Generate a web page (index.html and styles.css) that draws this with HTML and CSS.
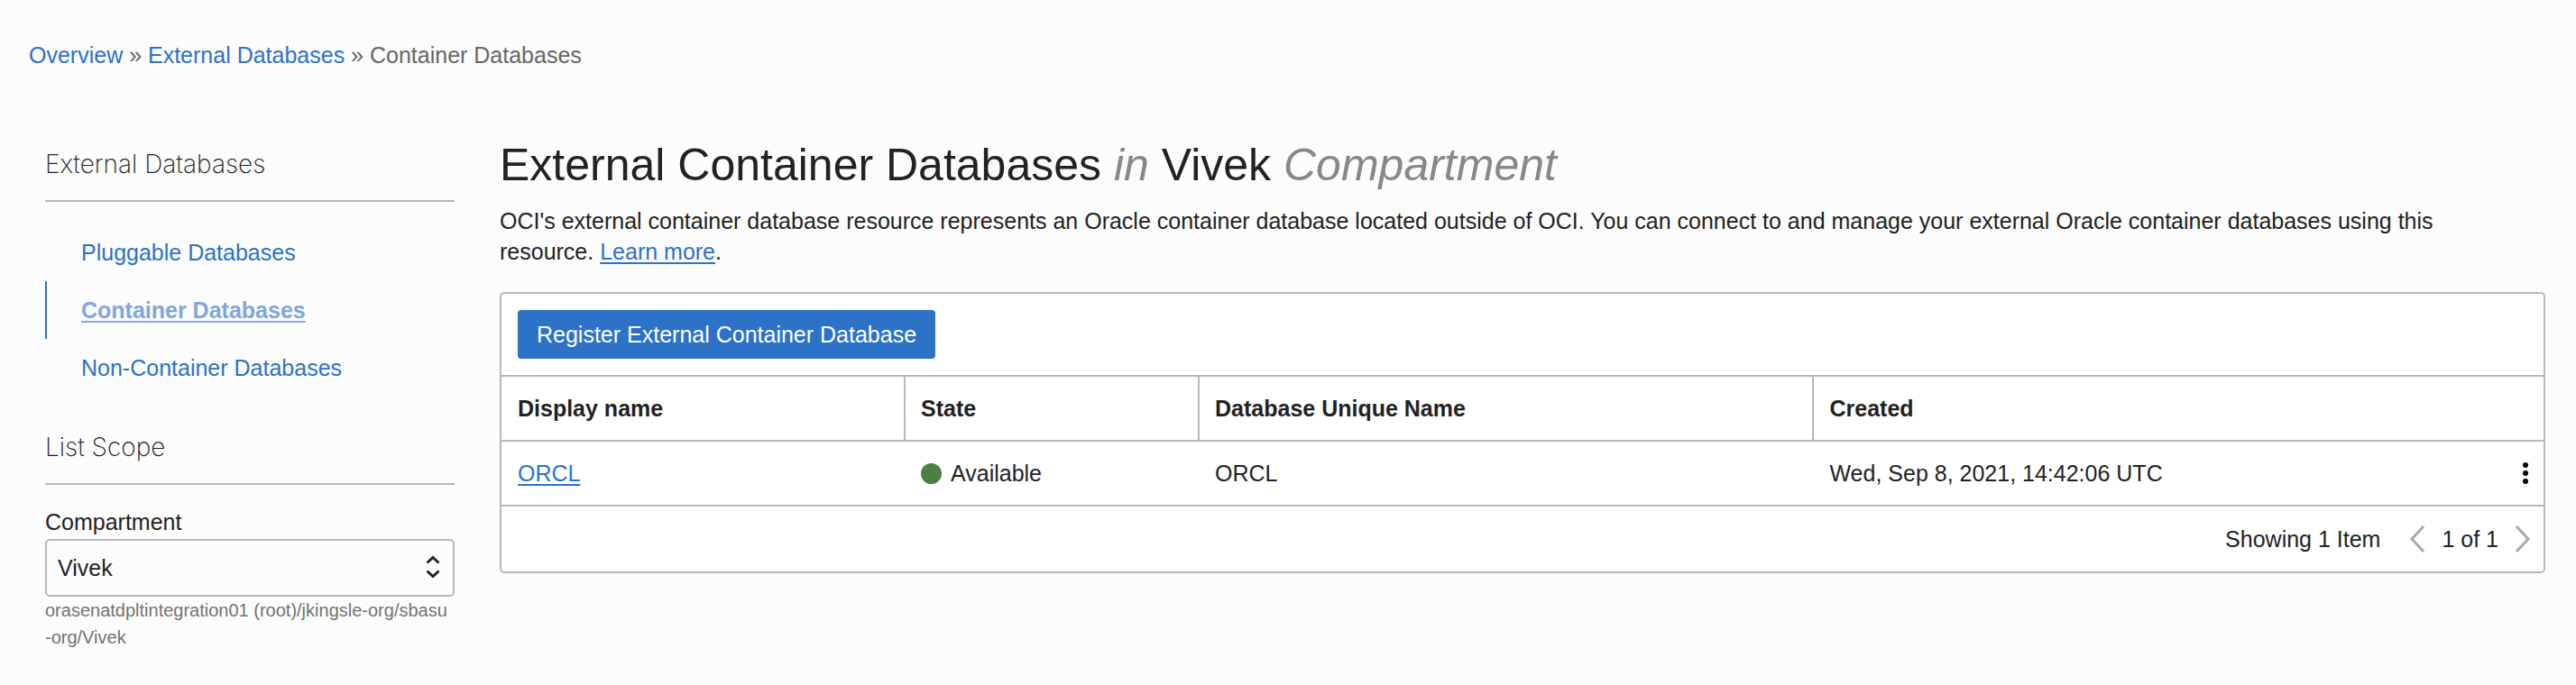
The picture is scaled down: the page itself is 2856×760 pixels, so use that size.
FILE: index.html
```html
<!DOCTYPE html>
<html lang="en">
<head>
<meta charset="utf-8">
<title>External Container Databases</title>
<link rel="stylesheet" href="styles.css">
</head>
<body>
<nav class="breadcrumb" aria-label="Breadcrumb">
  <a href="#">Overview</a> » <a href="#">External Databases</a> » <span>Container Databases</span>
</nav>
<div class="layout">
  <aside class="sidebar">
    <h2 class="side-title">External Databases</h2>
    <ul class="side-nav">
      <li><a href="#">Pluggable Databases</a></li>
      <li class="active"><a href="#" aria-current="page">Container Databases</a></li>
      <li><a href="#">Non-Container Databases</a></li>
    </ul>
    <h2 class="side-title">List Scope</h2>
    <div class="scope">
      <label for="compartment">Compartment</label>
      <div class="select-wrap">
        <select id="compartment"><option>Vivek</option></select>
        <svg class="select-icon" width="16" height="28" viewBox="0 0 16 28" fill="none" stroke="#222" stroke-width="3" aria-hidden="true"><path d="M1.500 9.500 8 3.500l6.500 6M1.500 18.500l6.500 6 6.500-6"/></svg>
      </div>
      <p class="hint">orasenatdpltintegration01 (root)/jkingsle-org/sbasu<wbr><span class="nobreak">-org/Vivek</span></p>
    </div>
  </aside>
  <main class="content">
    <h1 class="title">External Container Databases <em>in</em> Vivek <em>Compartment</em></h1>
    <p class="description">OCI's external container database resource represents an Oracle container database located outside of OCI. You can connect to and manage your external Oracle container databases using this resource. <a href="#">Learn more</a>.</p>
    <section class="panel">
      <div class="toolbar"><button class="primary" type="button">Register External Container Database</button></div>
      <table class="grid">
        <colgroup><col class="col-name"><col class="col-state"><col class="col-unique"><col></colgroup>
        <thead>
          <tr><th>Display name</th><th>State</th><th>Database Unique Name</th><th>Created</th></tr>
        </thead>
        <tbody>
          <tr>
            <td><a href="#">ORCL</a></td>
            <td><span class="state"><span class="dot"></span>Available</span></td>
            <td>ORCL</td>
            <td><div class="created">Wed, Sep 8, 2021, 14:42:06 UTC
              <button class="icon-button" type="button" aria-label="Actions"><svg width="8" height="26" viewBox="0 0 8 26" aria-hidden="true"><circle cx="4" cy="4" r="3"/><circle cx="4" cy="13" r="3"/><circle cx="4" cy="22" r="3"/></svg></button></div></td>
          </tr>
        </tbody>
      </table>
      <footer class="pager">
        <span class="count">Showing 1 Item</span>
        <button class="icon-button" type="button" aria-label="Previous page"><svg width="18" height="32" viewBox="0 0 18 32" fill="none" stroke="#aaa" stroke-width="3" aria-hidden="true"><path d="M16 2 3 16l13 14"/></svg></button>
        <span>1 of 1</span>
        <button class="icon-button" type="button" aria-label="Next page"><svg width="18" height="32" viewBox="0 0 18 32" fill="none" stroke="#aaa" stroke-width="3" aria-hidden="true"><path d="m2 2 13 14L2 30"/></svg></button>
      </footer>
    </section>
  </main>
</div>
</body>
</html>
```
FILE: styles.css
```css
* { box-sizing: border-box; }

body {
  margin: 0;
  padding: 44px 34px 0 32px;
  background: #fcfcfc;
  color: #222;
  font: 25px/34px "Liberation Sans", Arial, sans-serif;
}

h1, h2, p, ul { margin: 0; padding: 0; font-weight: 400; }
a { color: #2c72c7; }
button, select { font: inherit; color: inherit; }

.breadcrumb { color: #666; }
.breadcrumb a, .side-nav a { text-decoration: none; }

.layout { display: flex; gap: 50px; padding: 72px 0 0 18px; }

.sidebar { flex: 0 0 454px; padding-top: 12px; }
.side-title {
  padding-bottom: 20px;
  border-bottom: 2px solid #b3b9c1;
  font: 200 28px/40px Inter, Roboto, sans-serif;
}
.side-nav { list-style: none; padding: 24px 0 36px; }
.side-nav li { padding: 15px 0 15px 38px; border-left: 2px solid transparent; }
.side-nav .active { border-color: #2c72c7; font-weight: 700; }
.side-nav .active a {
  color: #80a6dd;
  text-decoration: underline;
  text-decoration-thickness: 2px;
  text-underline-offset: 3px;
}

.scope { padding-top: 24px; }
.scope label { display: block; padding-bottom: 2px; }
.select-wrap { position: relative; }
.select-wrap select {
  display: block;
  width: 100%;
  height: 64px;
  padding: 0 12px;
  appearance: none;
  border: 2px solid #b3b9c1;
  border-radius: 5px;
  background: #fcfcfc;
}
.select-icon { position: absolute; right: 16px; top: 17px; pointer-events: none; }
.hint { color: #737373; font-size: 20px; line-height: 30px; }
.nobreak { white-space: nowrap; }

.content { flex: 1; min-width: 0; }
.title { padding: 3px 0 15px; font-size: 50px; line-height: 60px; }
.title em { color: #888; }
.description { padding: 0 64px 28px 0; }
.description a, .grid a {
  text-decoration-thickness: 2px;
  text-underline-offset: 3px;
}

.panel { border: 2px solid #b3b9c1; border-radius: 5px; background: #fff; }
.toolbar { padding: 18px; }
.primary {
  display: block;
  padding: 10px 21px;
  border: 0;
  border-radius: 4px;
  background: #2c72c7;
  color: #fff;
}

.grid { width: 100%; border-collapse: separate; border-spacing: 0; table-layout: fixed; }
.col-name { width: 19.7%; }
.col-state { width: 14.4%; }
.col-unique { width: 30.1%; }
.grid th, .grid td {
  padding: 18px 16px;
  border-top: 2px solid #b3b9c1;
  text-align: left;
}
.grid th + th { padding-left: 17px; border-left: 2px solid #b3b9c1; }
.grid td + td { padding-left: 19px; }
.grid tr > :first-child { padding-left: 18px; }
.state { display: flex; align-items: center; gap: 10px; }
.dot { width: 23px; height: 23px; border-radius: 50%; background: #4a8042; }
.created { display: flex; justify-content: space-between; }

.icon-button {
  display: flex;
  align-items: center;
  padding: 0;
  border: 0;
  background: none;
}
.pager {
  display: flex;
  align-items: center;
  justify-content: flex-end;
  gap: 18px;
  padding: 19px 14px;
  border-top: 2px solid #b3b9c1;
}
.count { padding-right: 14px; }
```
